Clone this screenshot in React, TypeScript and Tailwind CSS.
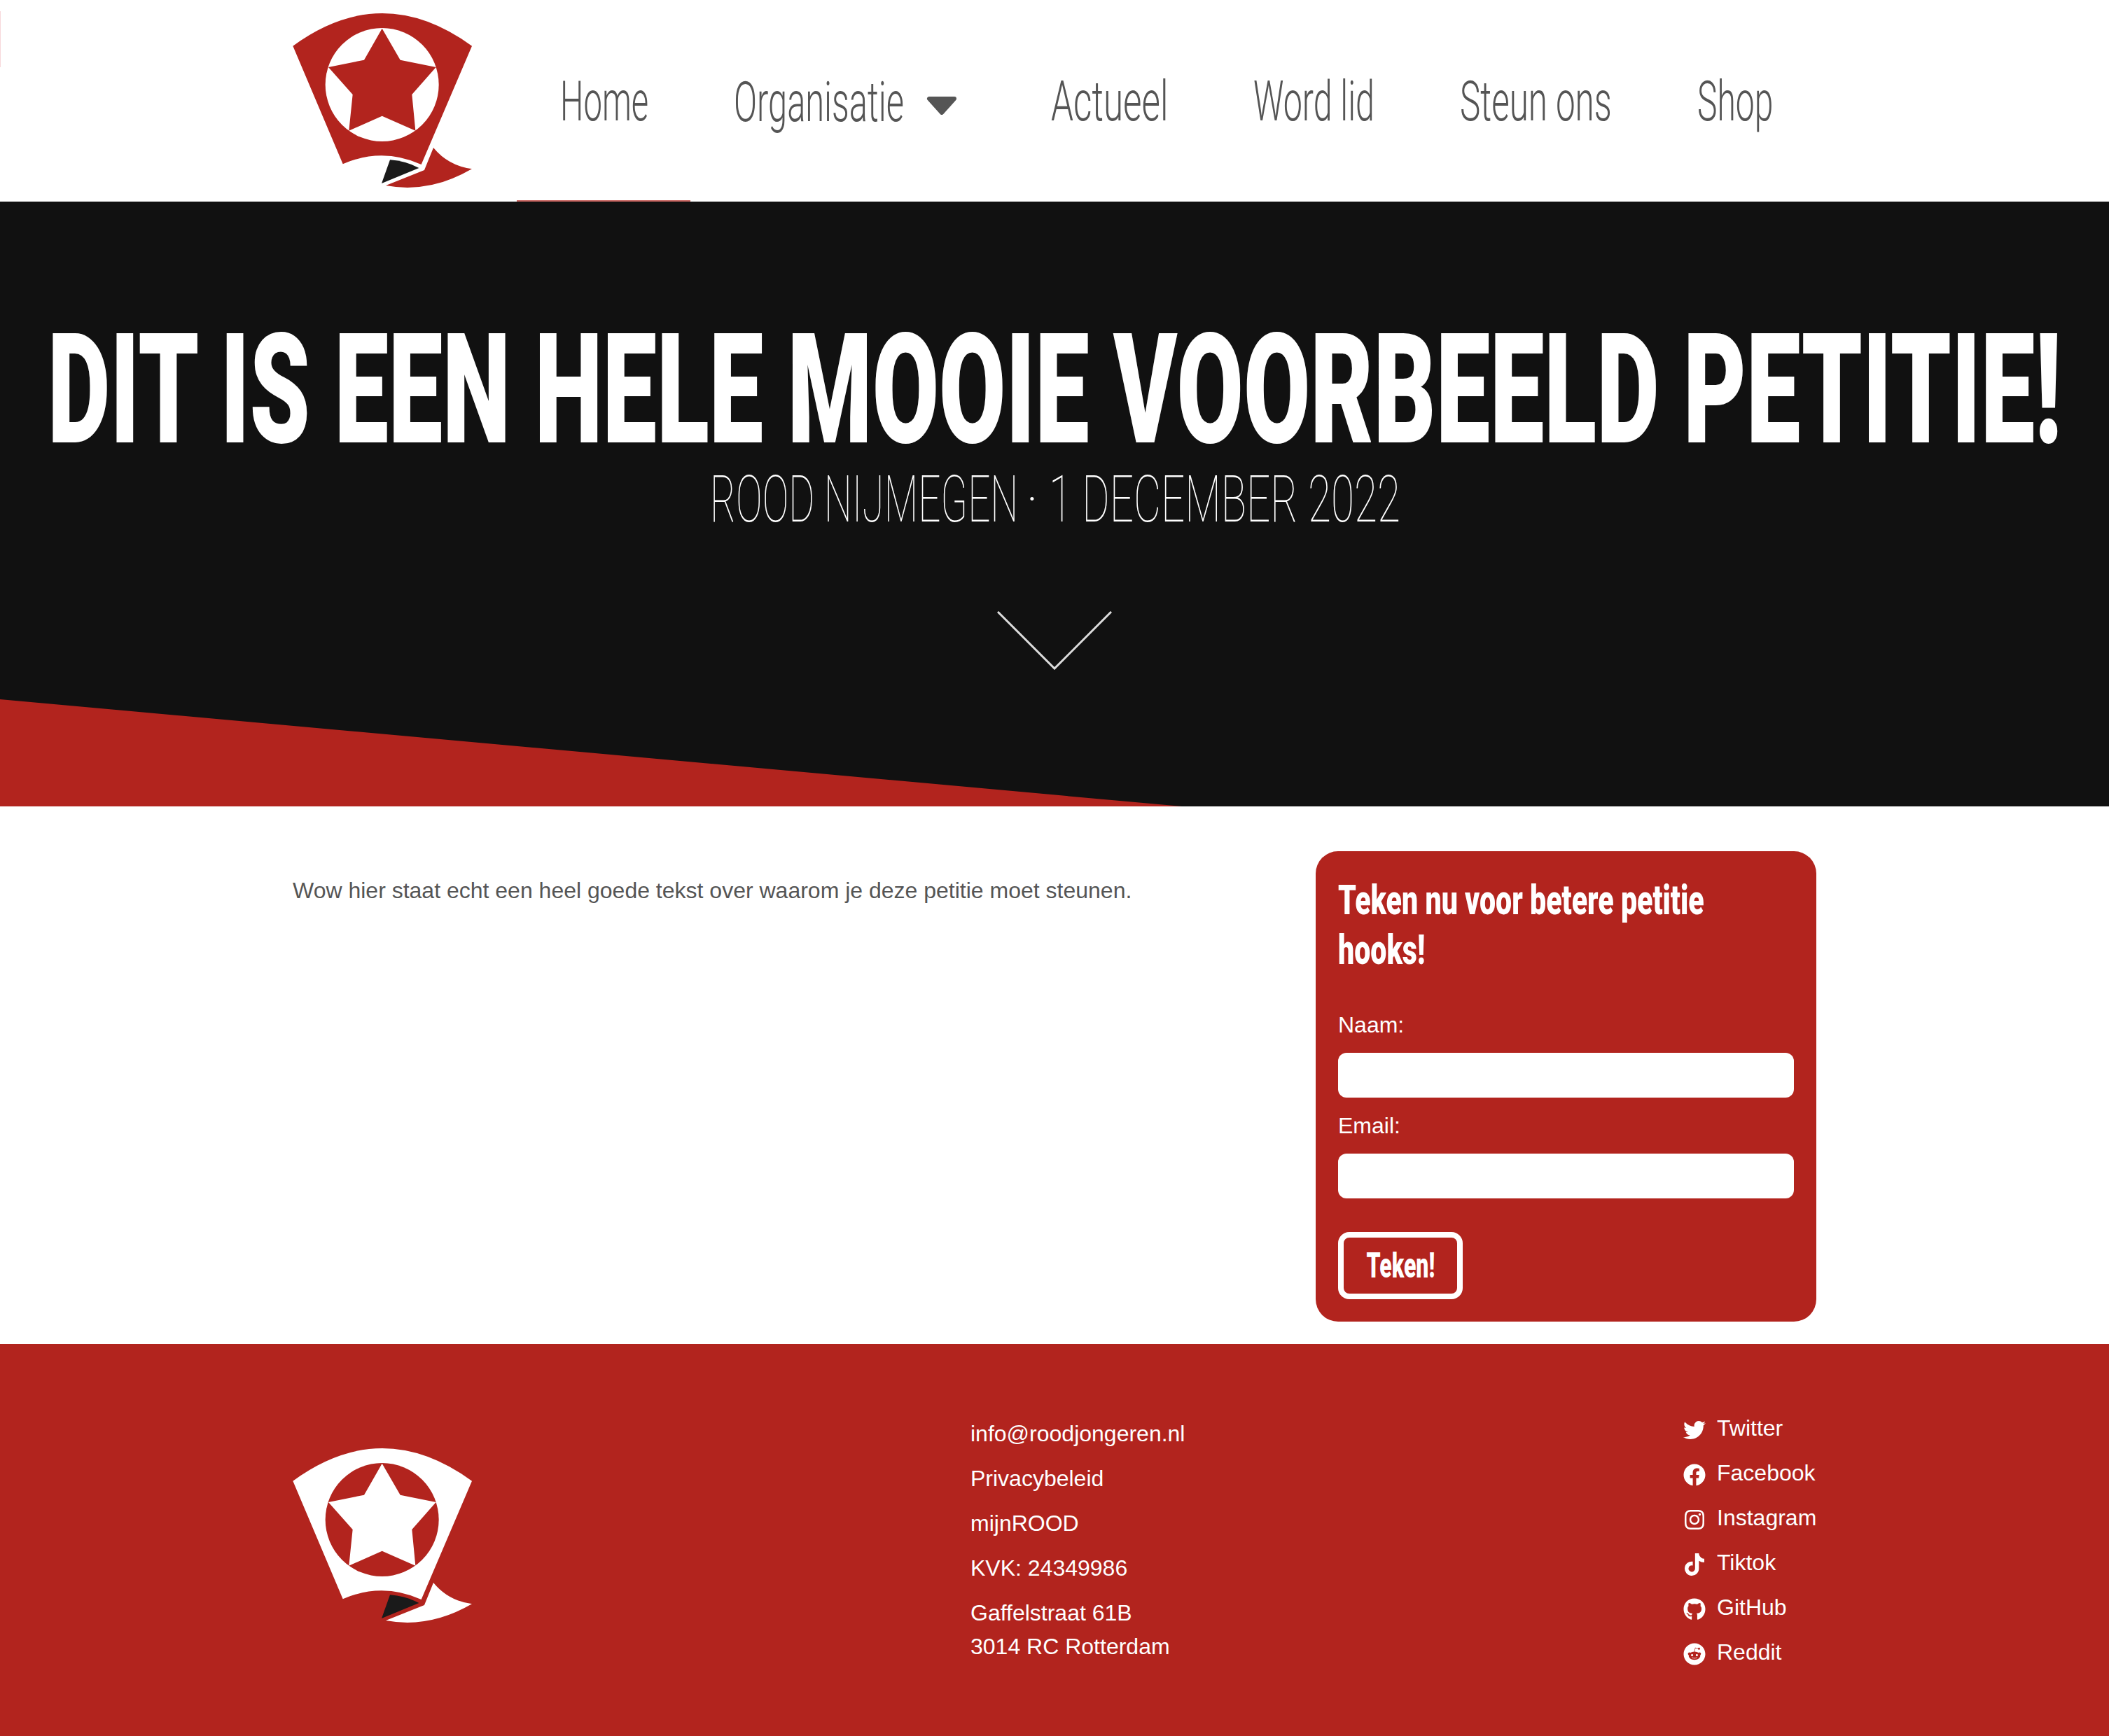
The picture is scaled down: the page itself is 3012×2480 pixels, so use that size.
import React from 'react';
import { FaTwitter, FaFacebook, FaInstagram, FaTiktok, FaGithub, FaReddit } from 'react-icons/fa';

const SOCIALS = [
  { label: 'Twitter', icon: FaTwitter },
  { label: 'Facebook', icon: FaFacebook },
  { label: 'Instagram', icon: FaInstagram },
  { label: 'Tiktok', icon: FaTiktok },
  { label: 'GitHub', icon: FaGithub },
  { label: 'Reddit', icon: FaReddit },
];

function Logo({ main, inner }: { main: string; inner: string }) {
  return (
    <svg viewBox="0 0 1020 864" className="w-[340px] h-[288px] shrink-0">
      <path d="M115 197Q497 -83 882 197L665 705Q497 630 329 703Z" fill={main} />
      <circle cx="497" cy="363" r="243" fill={inner} />
      <path d="M497 122L575 257L728 288L625 405L640 560L497 497L355 560L371 405L267 288L420 257Z" fill={main} />
      <path d="M531 685Q600 690 655 720L495 786Z" fill="#1a1a1a" />
      <path d="M717 633Q780 710 882 724Q700 830 513 795L678 729Z" fill={main} />
    </svg>
  );
}

function NavItem({ label, width, squeeze, active }: { label: string; width: string; squeeze: string; active?: boolean }) {
  return (
    <div className={`h-[288px] flex items-center px-[62px] border-b-2 ${active ? 'border-[#b2241e]/70' : 'border-transparent'}`}>
      <div className={`${width} pt-[4px]`}>
        <span className={`block origin-left ${squeeze} whitespace-nowrap font-['Roboto',sans-serif] font-light text-[80px] leading-none text-[#555555]`}>
          {label}
        </span>
      </div>
    </div>
  );
}

export default function App() {
  return (
    <div className="relative w-[3012px] bg-white font-['Liberation_Sans',Arial,sans-serif]">
      <div className="absolute left-0 top-[16px] w-[1px] h-[80px] bg-[#f8d7da]" />

      {/* Header */}
      <header className="h-[288px] flex bg-white overflow-hidden">
        <div className="w-[738px] pl-[380px] shrink-0">
          <Logo main="#b2241e" inner="#ffffff" />
        </div>
        <nav className="flex items-start">
          <NavItem label="Home" width="w-[124px]" squeeze="scale-x-[0.59]" active />
          <div className="h-[288px] flex items-center pl-[62px] pr-[72px] gap-[31px]">
            <div className="w-[244px] pt-[4px]">
              <span className="block origin-left scale-x-[0.61] whitespace-nowrap font-['Roboto',sans-serif] font-light text-[80px] leading-none text-[#555555]">
                Organisatie
              </span>
            </div>
            <svg viewBox="0 0 44 26" className="w-[44px] h-[26px] mt-[14px]">
              <path d="M4 3H40L22 23Z" fill="#555555" stroke="#555555" strokeWidth="6" strokeLinejoin="round" />
            </svg>
          </div>
          <NavItem label="Actueel" width="w-[165px]" squeeze="scale-x-[0.64]" />
          <NavItem label="Word lid" width="w-[171px]" squeeze="scale-x-[0.605]" />
          <NavItem label="Steun ons" width="w-[215px]" squeeze="scale-x-[0.617]" />
          <NavItem label="Shop" width="w-[108px]" squeeze="scale-x-[0.6]" />
        </nav>
      </header>

      {/* Hero */}
      <section className="relative h-[864px] bg-[#111111] overflow-hidden pt-[160px]">
        <div className="flex justify-center">
          <h1 className="shrink-0 scale-x-[0.631] whitespace-nowrap font-['Roboto',sans-serif] font-black text-[219px] leading-[219px] text-white">
            DIT IS EEN HELE MOOIE VOORBEELD PETITIE!
          </h1>
        </div>
        <div className="flex justify-center font-['Roboto',sans-serif] font-thin text-[93px] leading-[93px] text-white">
          <div className="w-[436px] shrink-0">
            <span className="block origin-left scale-x-[0.608] whitespace-nowrap">ROOD NIJMEGEN</span>
          </div>
          <div className="w-[48px] shrink-0 text-center">·</div>
          <div className="w-[500px] shrink-0">
            <span className="block origin-left scale-x-[0.647] whitespace-nowrap">1 DECEMBER 2022</span>
          </div>
        </div>
        <div className="flex justify-center mt-[113px]">
          <svg viewBox="0 0 164 84" className="w-[164px] h-[84px]">
            <path d="M1 1L82 82L163 1" fill="none" stroke="#dddddd" strokeWidth="3" />
          </svg>
        </div>
        <div className="absolute left-0 bottom-0 w-[1688px] h-[153px] bg-[#b2241e] [clip-path:polygon(0_0,100%_100%,0_100%)]" />
      </section>

      {/* Content */}
      <main className="h-[768px] flex justify-between pl-[418px] pr-[418px] pt-[64px]">
        <p className="pt-[32px] text-[32px] leading-[48px] text-[#555555]">
          Wow hier staat echt een heel goede tekst over waarom je deze petitie moet steunen.
        </p>
        <form className="w-[715px] h-[672px] shrink-0 bg-[#b2241e] rounded-[32px] p-[32px] text-white">
          <h2 className="w-[600px] pt-[2px] font-['Roboto',sans-serif] font-black text-[60px] leading-[71px]">
            <span className="block origin-left scale-x-[0.685] whitespace-nowrap">Teken nu voor betere petitie</span>
            <span className="block origin-left scale-x-[0.685] whitespace-nowrap">hooks!</span>
          </h2>
          <label className="block mt-[48px] text-[32px] leading-[48px]">Naam:</label>
          <div className="mt-[16px] h-[64px] bg-white rounded-[12px]" />
          <label className="block mt-[16px] text-[32px] leading-[48px]">Email:</label>
          <div className="mt-[16px] h-[64px] bg-white rounded-[12px]" />
          <button type="button" className="mt-[48px] w-[178px] h-[96px] border-[8px] border-white rounded-[16px] flex items-center justify-center">
            <span className="shrink-0 scale-x-[0.64] whitespace-nowrap font-['Roboto',sans-serif] font-black text-[50px] leading-none">
              Teken!
            </span>
          </button>
        </form>
      </main>

      {/* Footer */}
      <footer className="h-[560px] bg-[#b2241e] flex pl-[380px] text-white text-[32px] leading-[48px]">
        <div className="w-[1006px] pt-[130px] shrink-0">
          <Logo main="#ffffff" inner="#b2241e" />
        </div>
        <div className="w-[1018px] pt-[104px] shrink-0 flex flex-col gap-[16px]">
          <span>info@roodjongeren.nl</span>
          <span>Privacybeleid</span>
          <span>mijnROOD</span>
          <span>KVK: 24349986</span>
          <span>
            Gaffelstraat 61B
            <br />
            3014 RC Rotterdam
          </span>
        </div>
        <div className="pt-[96px] flex flex-col gap-[16px]">
          {SOCIALS.map(({ label, icon: Icon }) => (
            <div key={label} className="flex items-center gap-[16px] h-[48px]">
              <Icon className="w-[32px] h-[32px] mt-[6px]" />
              <span>{label}</span>
            </div>
          ))}
        </div>
      </footer>
    </div>
  );
}
